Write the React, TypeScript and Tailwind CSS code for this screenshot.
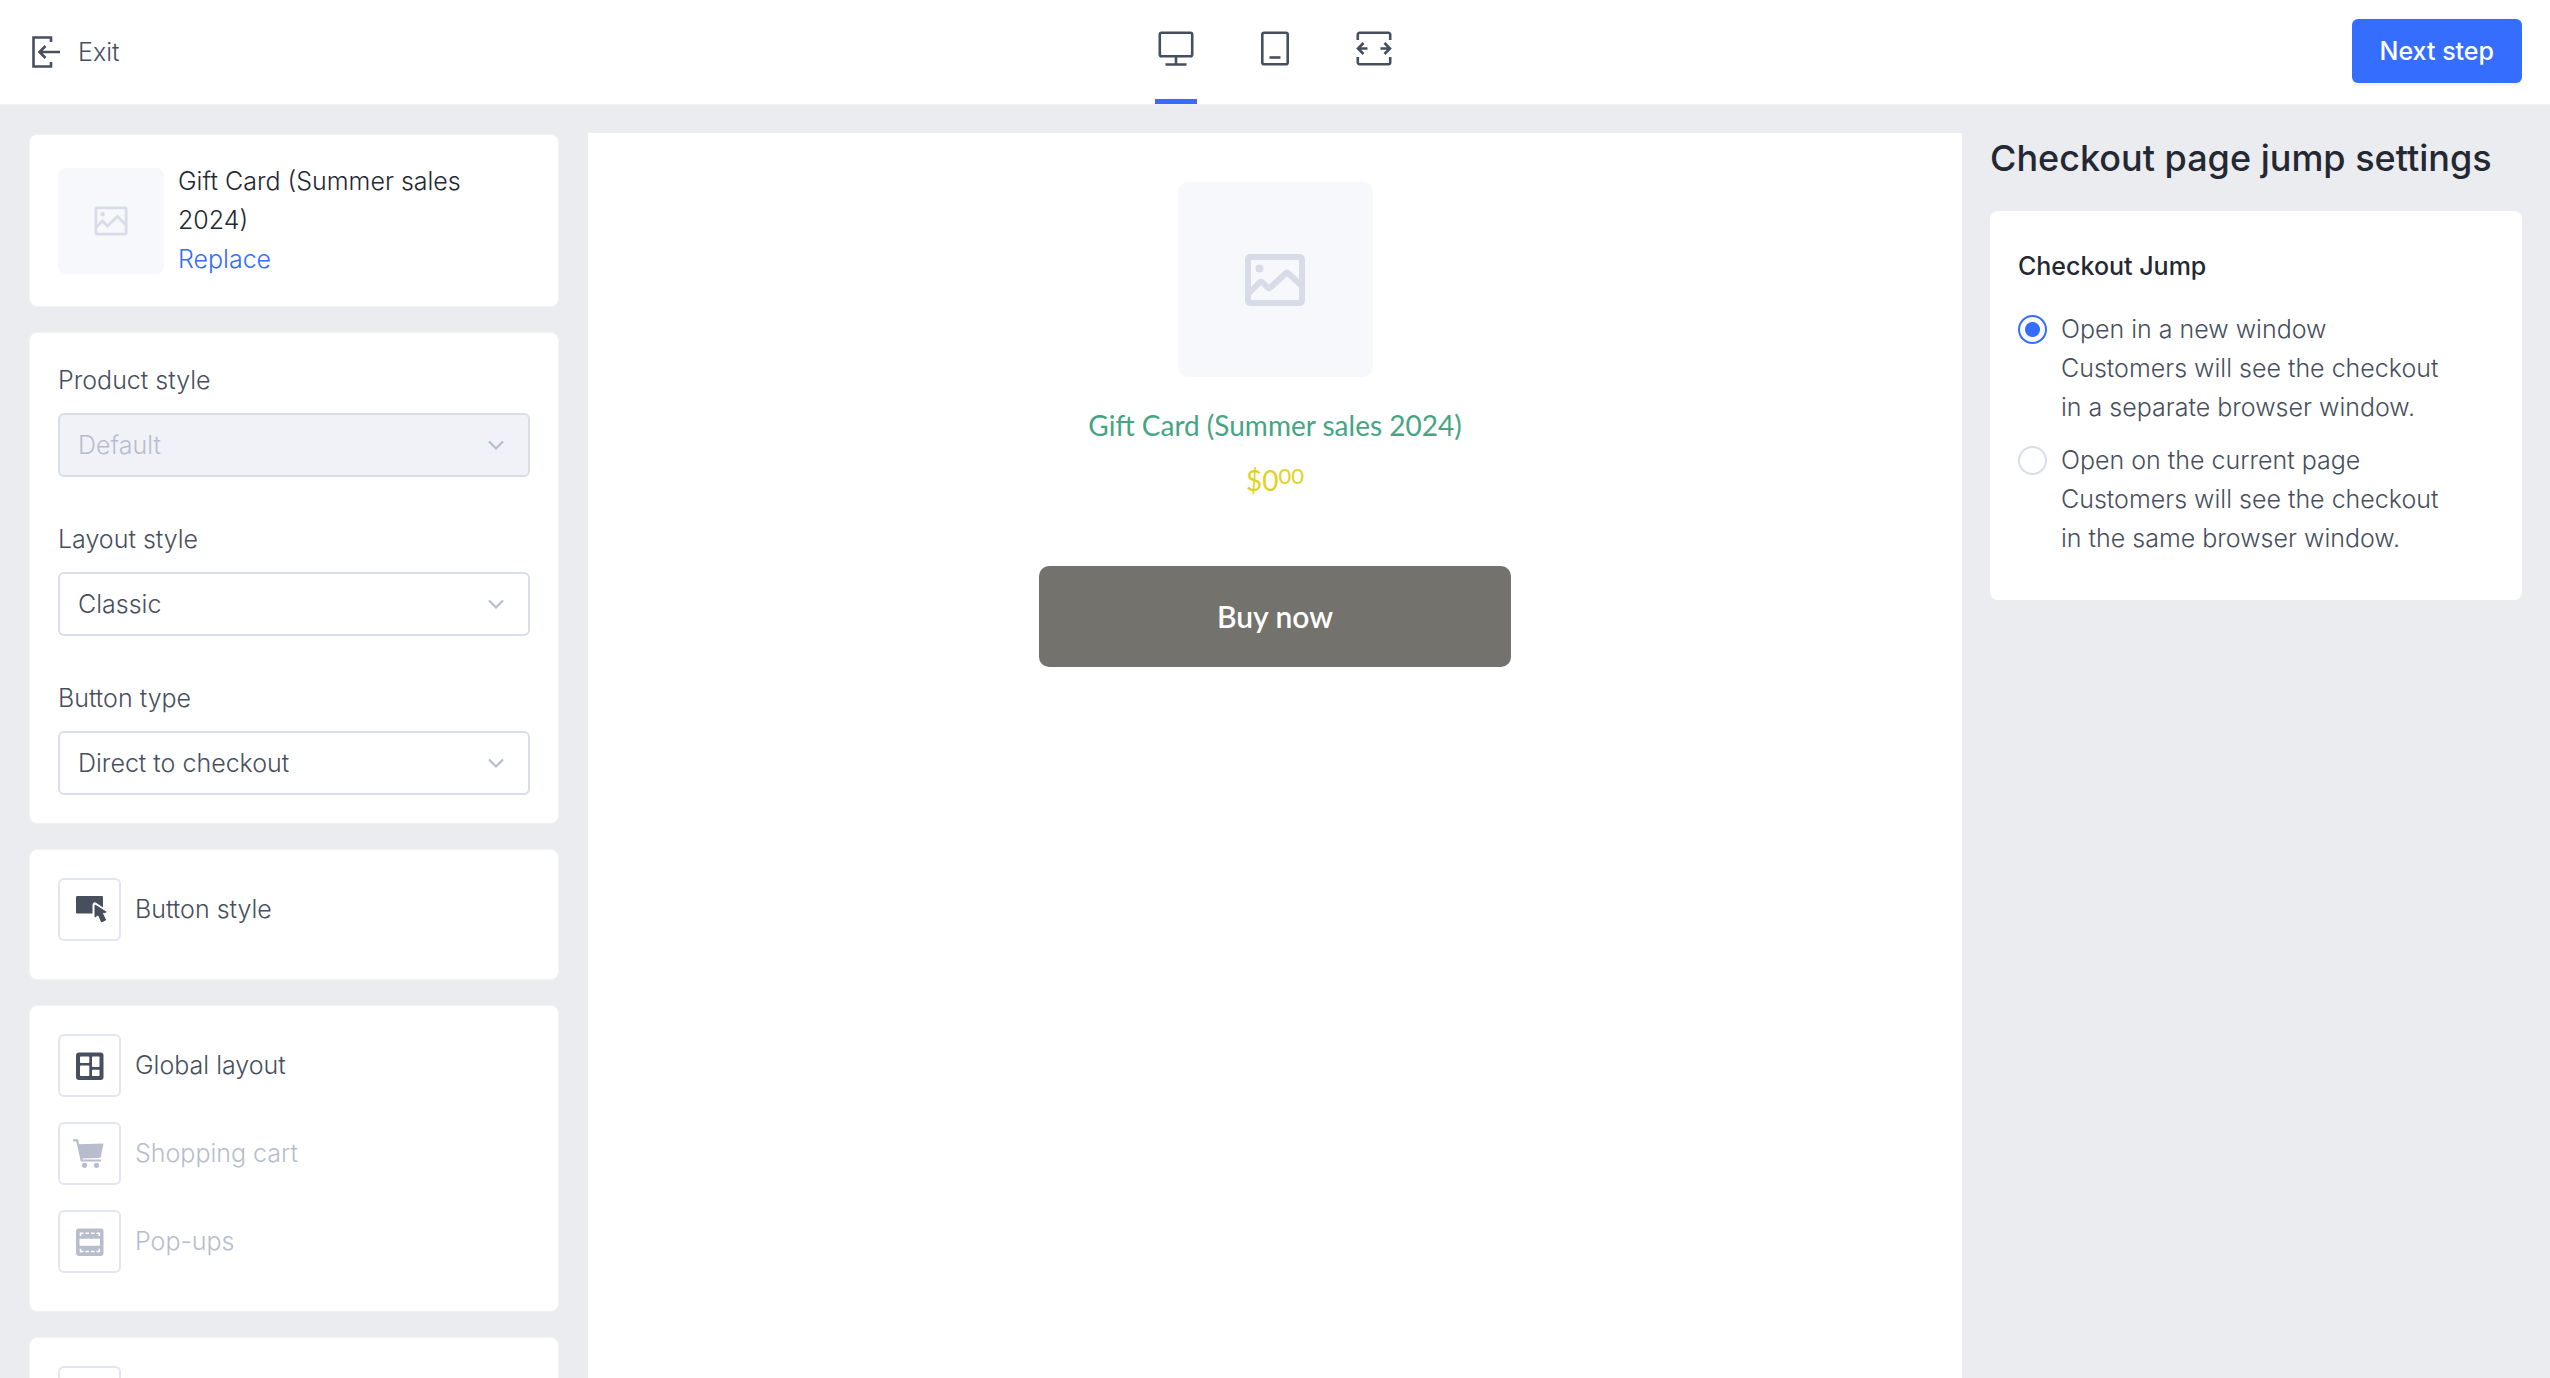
import React, { useState } from "react";

const card = "rounded-lg border border-[#f1f2f3] bg-white px-7";

function ExitIcon() {
  return (
    <svg className="h-9 w-[34px]" viewBox="-2 0 34 36" fill="none" stroke="#474f5e" strokeWidth="2.6">
      <path d="M21 8V3.500H3.500v29H21V28" />
      <path d="M30 18H10M15.500 12L9.500 18l6 6" />
    </svg>
  );
}

function MonitorIcon() {
  return (
    <svg className="size-10" viewBox="0 0 40 40" fill="none" stroke="#474f5e" strokeWidth="2.6">
      <rect x="3.800" y="4.800" width="32.400" height="23.400" rx="1.800" />
      <path d="M20 28V37M9.500 36.500h21" />
    </svg>
  );
}

function TabletIcon() {
  return (
    <svg className="size-10" viewBox="0 0 40 40" fill="none" stroke="#474f5e" strokeWidth="2.6">
      <rect x="7.300" y="4.800" width="25.400" height="31.400" rx="1.800" />
      <path d="M14.500 29.500h11" />
    </svg>
  );
}

function ExpandIcon() {
  return (
    <svg className="size-10" viewBox="0 0 40 40" fill="none" stroke="#474f5e" strokeWidth="2.6">
      <path d="M3.800 12V6.500a1.700 1.700 0 0 1 1.700-1.700h29a1.700 1.700 0 0 1 1.700 1.700V12" />
      <path d="M3.800 29v5.500a1.700 1.700 0 0 0 1.700 1.700h29a1.700 1.700 0 0 0 1.700-1.700V29" />
      <path d="M13.500 20.500H4.500M9.500 15L4 20.500l5.500 5.500M26.500 20.500h9M30.500 15L36 20.500l-5.500 5.500" />
    </svg>
  );
}

function SmallImageIcon() {
  return (
    <svg className="h-8 w-9" viewBox="0 0 36 32" fill="none" stroke="#d8dce8" strokeWidth="2.800">
      <rect x="2.900" y="2.900" width="30.200" height="26.200" rx="1" />
      <path d="M3 22.500l6.500-6.500 5 5L24.500 11.500l8.500 8.500" />
      <circle cx="9.500" cy="9.300" r="2.300" fill="#d8dce8" stroke="none" />
    </svg>
  );
}

function LargeImageIcon() {
  return (
    <svg className="h-14 w-16" viewBox="0 0 64 56" fill="none" stroke="#d8dce8" strokeWidth="6">
      <rect x="5" y="5" width="54" height="46" rx="2" />
      <path d="M5 42l11.500-11.500q1.500-1.500 3 0l5 5q1.500 1.500 3 0L42.500 21.500q1.500-1.500 3 0L59 34" />
      <circle cx="16.500" cy="16.500" r="4" fill="#d8dce8" stroke="none" />
    </svg>
  );
}

function ButtonStyleIcon() {
  return (
    <svg className="size-9" viewBox="0 0 36 36">
      <rect x="4" y="4" width="27" height="17.500" rx="1.200" fill="#474f5e" />
      <path
        d="M23 13v11.500l3-2 3.500 7.500 3.500-1.700-3.500-7.200 4-1z"
        fill="#fff"
        stroke="#fff"
        strokeWidth="5"
        strokeLinejoin="round"
      />
      <path
        d="M23 13v12l3.300-2.300L29.500 30l4.200-2-3.500-7 4-1z"
        fill="#474f5e"
        stroke="#474f5e"
        strokeLinejoin="round"
      />
    </svg>
  );
}

function LayoutIcon() {
  return (
    <svg className="size-9" viewBox="0 0 36 36">
      <rect x="4" y="4.500" width="27.500" height="27.500" rx="3" fill="#474f5e" />
      <g fill="#fff">
        <rect x="8" y="8.500" width="9.300" height="6.500" rx=".8" />
        <rect x="8" y="17.500" width="9.300" height="10.500" rx=".8" />
        <rect x="20" y="8.500" width="7.500" height="10.500" rx=".8" />
        <rect x="20" y="21.800" width="7.500" height="6.200" rx=".8" />
      </g>
    </svg>
  );
}

function CartIcon() {
  return (
    <svg className="size-9" viewBox="0 0 36 36" fill="#b7bdcc">
      <path
        d="M1 4.300h4.200L9.700 24.500h19.300"
        fill="none"
        stroke="#b7bdcc"
        strokeWidth="2.200"
        strokeLinejoin="round"
      />
      <path d="M6 8.200L31.500 7.400l-2.600 13q-.4 1.600-2 1.700L9.300 22.500z" />
      <circle cx="12.500" cy="29.300" r="2.600" />
      <circle cx="24.500" cy="29.300" r="2.600" />
    </svg>
  );
}

function PopupIcon() {
  return (
    <svg className="size-9" viewBox="0 0 36 36">
      <rect x="4" y="4.500" width="27.500" height="27.500" rx="3" fill="#b7bdcc" />
      <rect x="7.500" y="14.800" width="20.500" height="7" rx=".8" fill="#fff" />
      <path
        d="M8.500 12V9.300h3M13.500 9.300h3.500M19 9.300H22.500M24.500 9.300h2.800V12M8.500 24.800v2.700h3M13.500 27.500h3.500M19 27.500H22.500M24.500 27.500h2.800v-2.700"
        fill="none"
        stroke="#fff"
        strokeWidth="1.600"
      />
    </svg>
  );
}

function SelectField({ id, label, options, disabled = false }: { id: string; label: string; options: string[]; disabled?: boolean }) {
  return (
    <div>
      <label htmlFor={id} className="mb-[13px] block">
        {label}
      </label>
      <div className="relative">
        <select
          id={id}
          disabled={disabled}
          className="block h-16 w-full appearance-none rounded-md border-2 border-[#dadeea] bg-white px-[18px] disabled:bg-[#f1f2f8] disabled:text-[#b7bdcc] disabled:opacity-100"
        >
          {options.map((o) => (
            <option key={o}>{o}</option>
          ))}
        </select>
        <svg
          className="pointer-events-none absolute right-6 top-6 h-4 w-5"
          viewBox="0 0 20 16"
          fill="none"
          stroke="#b7bdcc"
          strokeWidth="2.200"
        >
          <path d="M3 4.500l7 7 7-7" />
        </svg>
      </div>
    </div>
  );
}

function ToolRow({ label, icon, disabled = false }: { label: string; icon: React.ReactNode; disabled?: boolean }) {
  return (
    <button type="button" disabled={disabled} className="flex items-center gap-[14px] text-left disabled:text-[#b7bdcc]">
      <span className="flex size-[63px] shrink-0 items-center justify-center rounded-md border-2 border-[#e3e6f0]">
        {icon}
      </span>
      {label}
    </button>
  );
}

function RadioOption({ title, text, value, current, onPick }: { title: string; text: string; value: string; current: string; onPick: (v: string) => void }) {
  return (
    <label className="flex gap-[14px]">
      <input
        type="radio"
        name="jump"
        value={value}
        checked={current === value}
        onChange={() => onPick(value)}
        className="mt-[5px] size-[29px] shrink-0 appearance-none rounded-full border-2 border-[#dadeea] bg-white checked:border-[#356dff] checked:bg-[radial-gradient(circle,#356dff_7px,white_8px)]"
      />
      <span className="max-w-[390px]">
        {title}
        <br />
        {text}
      </span>
    </label>
  );
}

export default function App() {
  const [device, setDevice] = useState("Desktop");
  const [jump, setJump] = useState("new");
  const devices = [
    { name: "Desktop", icon: <MonitorIcon /> },
    { name: "Tablet", icon: <TabletIcon /> },
    { name: "Full width", icon: <ExpandIcon /> },
  ];

  return (
    <div className="flex h-screen flex-col overflow-hidden bg-[#ebecf0] font-[Inter,'Liberation_Sans',sans-serif] text-[25px] font-light leading-[39px] text-[#474f5e]">
      <header className="grid h-[105px] shrink-0 grid-cols-[1fr_auto_1fr] border-b border-[#f1f2f4] bg-white px-7">
        <button type="button" className="flex items-center gap-4 justify-self-start">
          <ExitIcon />
          Exit
        </button>
        <nav className="flex gap-[57px]">
          {devices.map((d) => (
            <button
              key={d.name}
              type="button"
              aria-label={d.name}
              aria-pressed={device === d.name}
              onClick={() => setDevice(d.name)}
              className="flex w-[42px] justify-center border-b-[5px] border-transparent pt-7 aria-pressed:border-[#356dff]"
            >
              {d.icon}
            </button>
          ))}
        </nav>
        <button
          type="button"
          className="mt-[19px] h-16 justify-self-end rounded-md bg-[#356dff] px-7 font-medium text-white shadow-[0_3px_0_#f4f4f4]"
        >
          Next step
        </button>
      </header>

      <div className="flex min-h-0 flex-1">
        <aside className="flex w-[588px] shrink-0 flex-col gap-[25px] overflow-hidden px-[29px] pt-[29px]">
          <section className={`${card} flex shrink-0 items-center gap-[14px] py-[27px]`}>
            <div className="flex size-[106px] shrink-0 items-center justify-center rounded-lg bg-[#f7f8fc]">
              <SmallImageIcon />
            </div>
            <div className="max-w-[320px] text-[#242833]">
              <p>Gift Card (Summer sales 2024)</p>
              <a href="#replace" className="block text-[#356dff]">
                Replace
              </a>
            </div>
          </section>

          <section className={`${card} flex shrink-0 flex-col gap-[43px] py-7`}>
            <SelectField id="product-style" label="Product style" options={["Default"]} disabled />
            <SelectField id="layout-style" label="Layout style" options={["Classic"]} />
            <SelectField id="button-type" label="Button type" options={["Direct to checkout"]} />
          </section>

          <section className={`${card} flex shrink-0 flex-col items-start pb-[38px] pt-7`}>
            <ToolRow label="Button style" icon={<ButtonStyleIcon />} />
          </section>

          <section className={`${card} flex shrink-0 flex-col items-start gap-[25px] pb-[38px] pt-7`}>
            <ToolRow label="Global layout" icon={<LayoutIcon />} />
            <ToolRow label="Shopping cart" icon={<CartIcon />} disabled />
            <ToolRow label="Pop-ups" icon={<PopupIcon />} disabled />
          </section>

          <section className={`${card} flex shrink-0 flex-col items-start pb-[38px] pt-7`}>
            <ToolRow label="" icon={null} />
          </section>
        </aside>

        <main className="mt-7 flex min-w-0 flex-1 flex-col items-center bg-white pt-[49px] font-[Lato,sans-serif] font-normal">
          <div className="flex size-[195px] items-center justify-center rounded-[10px] bg-[#f7f8fc]">
            <LargeImageIcon />
          </div>
          <h1 className="mt-[27px] text-[28px] leading-[42px] text-[#45a583]">Gift Card (Summer sales 2024)</h1>
          <p className="mt-3 flex text-[28px] leading-[44px] text-[#dfd322]">
            $0<span className="text-[22px] leading-9">00</span>
          </p>
          <button
            type="button"
            className="mt-16 h-[101px] w-[472px] rounded-[10px] bg-[#73726c] text-[30px] font-semibold text-white"
          >
            Buy now
          </button>
        </main>

        <aside className="w-[588px] shrink-0 px-7 pt-7">
          <h2 className="text-[36px] font-medium leading-[50px] text-[#242833]">Checkout page jump settings</h2>
          <section className="mt-7 rounded-lg bg-white px-7 pb-[42px] pt-9">
            <fieldset className="flex flex-col gap-[14px]">
              <legend className="mb-6 font-medium text-[#242833]">Checkout Jump</legend>
              <RadioOption
                title="Open in a new window"
                text="Customers will see the checkout in a separate browser window."
                value="new"
                current={jump}
                onPick={setJump}
              />
              <RadioOption
                title="Open on the current page"
                text="Customers will see the checkout in the same browser window."
                value="current"
                current={jump}
                onPick={setJump}
              />
            </fieldset>
          </section>
        </aside>
      </div>
    </div>
  );
}
